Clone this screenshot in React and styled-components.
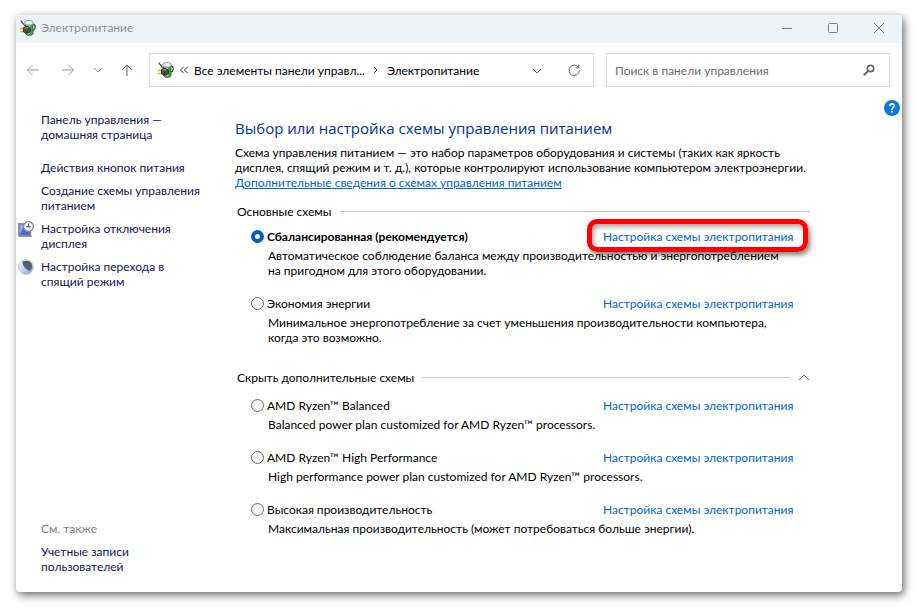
import React from 'react'
import styled, { createGlobalStyle } from 'styled-components'

const GlobalStyle = createGlobalStyle`
    * {
        box-sizing: border-box;
    }
    body {
        margin: 0;
        background: #fff;
        color: #000;
        font-family: Lato, "Noto Sans", sans-serif;
        font-size: 12px;
        line-height: 15px;
    }
    button, input {
        font: inherit;
        color: inherit;
    }
    p, h1, h2, ul, fieldset {
        margin: 0;
        padding: 0;
        border: 0;
    }
`

const Desktop = styled.div`
    display: flex;
    min-height: 100vh;
    padding: 15px 16px 16px;
`

const Window = styled.div`
    display: flex;
    flex-direction: column;
    flex: 1;
    min-width: 0;
    background: #fff;
    border-radius: 4px;
    overflow: hidden;
    box-shadow: 2px 3px 9px rgba(0, 0, 0, .6);
`

const TitleBar = styled.header`
    display: flex;
    align-items: center;
    height: 28px;
    padding: 0 0 3px 4px;
    background: #eef3f8;
    color: #8e9194;
`

const Title = styled.span`
    flex: 1;
    margin: 0 5px;
`

const CaptionButton = styled.button`
    display: flex;
    align-items: center;
    justify-content: center;
    width: 46px;
    height: 24px;
    padding: 0;
    border: 0;
    background: none;
    color: #7d8083;
`

const NavBar = styled.nav`
    display: flex;
    align-items: center;
    padding: 10px 12px 10px 8px;
`

const NavButtons = styled.div`
    display: flex;
    gap: 12px;
    width: 125px;
`

const IconButton = styled.button`
    display: flex;
    align-items: center;
    justify-content: center;
    width: ${props => props.$width || 18}px;
    height: 18px;
    padding: 0;
    border: 0;
    background: none;
    color: ${props => props.$dark ? '#666' : '#9a9a9a'};
`

const AddressBar = styled.div`
    display: flex;
    align-items: center;
    flex: 1;
    height: 34px;
    padding: 0 10px 0 8px;
    border: 1px solid #d9d9d9;
`

const Crumb = styled.button`
    padding: 0;
    border: 0;
    background: none;
    white-space: nowrap;
`

const Separator = styled.span`
    display: flex;
    justify-content: center;
    width: ${props => props.$width}px;
    color: #333;
`

const AddressActions = styled.div`
    display: flex;
    gap: 19px;
    margin-left: auto;
`

const SearchBox = styled.div`
    display: flex;
    align-items: center;
    flex: 0 1 284px;
    height: 34px;
    margin-left: 12px;
    padding: 0 11px 0 8px;
    border: 1px solid #d9d9d9;
`

const SearchInput = styled.input`
    flex: 1;
    min-width: 0;
    padding: 0;
    border: 0;
    outline: 0;
    background: none;
    &::placeholder {
        color: #6d6d6d;
        opacity: 1;
    }
`

const Content = styled.div`
    position: relative;
    display: flex;
    flex: 1;
    padding: 15px 92px 18px 0;
`

const HelpButton = styled.button`
    position: absolute;
    top: 3px;
    right: 2px;
    width: 16px;
    height: 16px;
    padding: 0;
    border: 0;
    background: none;
`

const Sidebar = styled.aside`
    display: flex;
    flex-direction: column;
    gap: 8px;
    width: 219px;
`

const SideLink = styled.a`
    display: grid;
    grid-template-columns: 16px 1fr;
    column-gap: 7px;
    padding-left: 2px;
    margin-bottom: ${props => props.$home ? 10 : 0}px;
    color: #151558;
    text-decoration: none;
`

const SideText = styled.span`
    grid-column: 2;
    white-space: nowrap;
`

const SeeAlso = styled.h2`
    margin-top: auto;
    padding-left: 25px;
    color: #808080;
    font-size: 12px;
    font-weight: 400;
`

const Main = styled.main`
    flex: 1;
    min-width: 0;
    padding-top: 6px;
`

const Heading = styled.h1`
    margin-bottom: 7px;
    color: #003399;
    font-family: "Open Sans", "Noto Sans", sans-serif;
    font-size: 15px;
    font-weight: 400;
    line-height: 20px;
    white-space: nowrap;
`

const Intro = styled.p`
    white-space: nowrap;
`

const MoreLink = styled.a`
    color: #0066cc;
    text-decoration: underline;
`

const Group = styled.fieldset`
    min-width: 0;
    margin-top: ${props => props.$first ? 14 : 25}px;
`

const GroupHeader = styled.div`
    display: flex;
    align-items: center;
    gap: 8px;
    margin: 0 0 ${props => props.$expandable ? 13 : 10}px 2px;
    white-space: nowrap;
`

const Rule = styled.span`
    flex: 1;
    height: 1px;
    background: #c8c8c8;
`

const ToggleButton = styled.button`
    display: flex;
    height: 15px;
    padding: 0;
    border: 0;
    background: none;
    color: #777;
`

const PlanList = styled.div`
    display: flex;
    flex-direction: column;
    gap: 18px;
    padding-left: 16px;
`

const PlanHead = styled.div`
    display: grid;
    grid-template-columns: 1fr 190px;
    margin-right: 17px;
    white-space: nowrap;
`

const PlanLabel = styled.label`
    display: flex;
    align-items: center;
    gap: 3px;
    font-weight: ${props => props.$active ? 700 : 400};
`

const Radio = styled.input`
    appearance: none;
    width: 13px;
    height: 13px;
    margin: 0;
    border: 1px solid #6e6e6e;
    border-radius: 50%;
    background: #f3f3f3;
    &:checked {
        border: 4px solid #005fb8;
        background: #fff;
    }
`

const LinkCell = styled.div`
    position: relative;
`

const PlanLink = styled.a`
    color: #0066cc;
    text-decoration: none;
`

const Marker = styled.span`
    position: absolute;
    inset: -10px -15px -8px -16px;
    border: 5px solid #f00;
    border-radius: 10px;
    box-shadow: 2px 3px 5px rgba(0, 0, 0, .5), inset 2px 3px 5px rgba(0, 0, 0, .35);
    pointer-events: none;
`

const PlanText = styled.p`
    margin-top: 4px;
    padding-left: 17px;
    white-space: nowrap;
`

const mainPlans = [
    {
        id: 'balanced',
        name: 'Сбалансированная (рекомендуется)',
        text: ['Автоматическое соблюдение баланса между производительностью и энергопотреблением', 'на пригодном для этого оборудовании.'],
        marked: true
    },
    {
        id: 'saver',
        name: 'Экономия энергии',
        text: ['Минимальное энергопотребление за счет уменьшения производительности компьютера,', 'когда это возможно.']
    }
]

const extraPlans = [
    { id: 'ryzen-balanced', name: 'AMD Ryzen™ Balanced', text: ['Balanced power plan customized for AMD Ryzen™ processors.'] },
    { id: 'ryzen-high', name: 'AMD Ryzen™ High Performance', text: ['High performance power plan customized for AMD Ryzen™ processors.'] },
    { id: 'high', name: 'Высокая производительность', text: ['Максимальная производительность (может потребоваться больше энергии).'] }
]

const PowerIcon = () => (
    <svg width="16" height="16" viewBox="0 0 16 16">
        <path d="M12.500 4.500c2.500-.5 3 1 2.600 3-.3 1.800-.9 2.600-2.600 2.600" fill="none" stroke="#4a4d4b" strokeWidth="1.300" />
        <path d="M5.500 3.500h7.500v9.700c0 3-7 3-7.500 0z" fill="#2fae3c" stroke="#2a5a30" strokeWidth=".8" />
        <path d="M7.500 4h2.500v10H7.500z" fill="#9aea94" />
        <path d="M5 2.200C5 0 13 0 13 2.200v2c-1 1.300-7 1.300-8 0z" fill="#eef4f6" stroke="#6b7a80" strokeWidth=".8" />
        <path d="M1 .5c0 2.500 3 2 3.500 5.500" fill="none" stroke="#444" strokeWidth="1.200" />
        <path d="M0 8.500h4M0 11.500h4" stroke="#e5a800" strokeWidth="1.500" />
        <path d="M3.500 7.700L5.500 6.500c3-.5 5 1 5 3.500S8 13.500 5.500 13l-2-1.200z" fill="#4a4d4c" stroke="#1c1c1c" strokeWidth=".8" />
        <path d="M4.800 8.300c1-.8 2.200-.8 3.400-.2" fill="none" stroke="#b5bab8" />
    </svg>
)

const DisplayIcon = () => (
    <svg width="16" height="16" viewBox="0 0 16 16">
        <path d="M.8 2.800h11.700v11.700H.8z" fill="#4a68dc" stroke="#8b8f98" strokeWidth="1.400" />
        <path d="M1.500 13.800L7 3.500H1.500z" fill="#8fa5f2" />
        <path d="M1 15.200h13" stroke="#777" />
        <circle cx="10.500" cy="5.500" r="4.900" fill="#f1f4f6" stroke="#8a8a86" strokeWidth="1.300" />
        <path d="M10.500 2.800v3h2.500M8 5.800h2" fill="none" stroke="#3a4f75" strokeWidth="1.100" />
    </svg>
)

const MoonIcon = () => (
    <svg width="16" height="16" viewBox="0 0 16 16">
        <defs>
            <linearGradient id="moon" x1="0" y1="0" x2="1" y2="1">
                <stop offset="0" stopColor="#f4f7fa" />
                <stop offset=".5" stopColor="#c2d6f2" />
                <stop offset="1" stopColor="#5f8fe8" />
            </linearGradient>
            <linearGradient id="shade" x1="1" y1="0" x2="0" y2="1">
                <stop offset="0" stopColor="#4c5258" />
                <stop offset=".6" stopColor="#59626e" />
                <stop offset="1" stopColor="#7f9fd8" />
            </linearGradient>
        </defs>
        <circle cx="8" cy="8" r="7.400" fill="url(#moon)" stroke="#c4c9ce" />
        <path d="M4.500 2.800C7.500 1 11.500 1.500 13.300 4.500c1.200 2.500.8 5.200-.8 6.800C8.500 12 4.500 8 4.500 2.800z" fill="url(#shade)" />
    </svg>
)

const Stroke = ({ d, width = 12, height = 12 }) => (
    <svg width={width} height={height} viewBox={`0 0 ${width} ${height}`} fill="none" stroke="currentColor">
        <path d={d} />
    </svg>
)

const PlanRow = ({ plan, selected, onSelect }) => (
    <div>
        <PlanHead>
            <PlanLabel htmlFor={plan.id} $active={selected}>
                <Radio type="radio" name="plan" id={plan.id} checked={selected} onChange={() => onSelect(plan.id)} />
                {plan.name}
            </PlanLabel>
            <LinkCell>
                <PlanLink href="#plan">Настройка схемы электропитания</PlanLink>
                {plan.marked && <Marker />}
            </LinkCell>
        </PlanHead>
        <PlanText>
            {plan.text.map((line, i) => <React.Fragment key={line}>{i > 0 && <br />}{line}</React.Fragment>)}
        </PlanText>
    </div>
)

export default class App extends React.Component {
    state = {
        plan: 'balanced',
        search: ''
    }

    selectPlan = (plan) => {
        this.setState({ plan })
    }

    handleSearch = (event) => {
        this.setState({ search: event.target.value })
    }

    renderPlans(plans) {
        return (
            <PlanList>
                {plans.map(plan => (
                    <PlanRow key={plan.id} plan={plan} selected={this.state.plan === plan.id} onSelect={this.selectPlan} />
                ))}
            </PlanList>
        )
    }

    render() {
        return (
            <Desktop>
                <GlobalStyle />
                <Window>
                    <TitleBar>
                        <PowerIcon />
                        <Title>Электропитание</Title>
                        <CaptionButton aria-label="Свернуть"><Stroke d="M1 6.500h10" /></CaptionButton>
                        <CaptionButton aria-label="Развернуть"><Stroke d="M2.500 1.500h7a1 1 0 0 1 1 1v7a1 1 0 0 1-1 1h-7a1 1 0 0 1-1-1v-7a1 1 0 0 1 1-1z" /></CaptionButton>
                        <CaptionButton aria-label="Закрыть"><Stroke d="M1 1l10 10M11 1L1 11" /></CaptionButton>
                    </TitleBar>
                    <NavBar>
                        <NavButtons>
                            <IconButton aria-label="Назад"><Stroke width={14} height={12} d="M13 6H1.500M6.500 1l-5 5 5 5" /></IconButton>
                            <IconButton $width={28} aria-label="Вперед"><Stroke width={14} height={12} d="M1 6h11.500M7.500 1l5 5-5 5" /></IconButton>
                            <IconButton $width={8} aria-label="Последние расположения"><Stroke width={8} d="M0 4l4 4 4-4" /></IconButton>
                            <IconButton $width={26} $dark aria-label="Вверх"><Stroke d="M6 12V1M1 6l5-5 5 5" /></IconButton>
                        </NavButtons>
                        <AddressBar>
                            <PowerIcon />
                            <Separator $width={20}><Stroke width={10} height={8} d="M4.500 1l-3 3 3 3M8.500 1l-3 3 3 3" /></Separator>
                            <Crumb>Все элементы панели управл...</Crumb>
                            <Separator $width={22}><Stroke width={6} height={8} d="M1 1l3 3-3 3" /></Separator>
                            <Crumb>Электропитание</Crumb>
                            <AddressActions>
                                <IconButton $dark aria-label="Предыдущие расположения"><Stroke width={10} d="M1 5l4 4 4-4" /></IconButton>
                                <IconButton $dark aria-label="Обновить"><Stroke d="M10.500 3.500A5.200 5.200 0 1 0 11.300 6.500M10.800 .5v3.300H7.500" /></IconButton>
                            </AddressActions>
                        </AddressBar>
                        <SearchBox>
                            <SearchInput aria-label="Поиск" placeholder="Поиск в панели управления" value={this.state.search} onChange={this.handleSearch} />
                            <IconButton $dark aria-label="Найти">
                                <svg width="12" height="12" viewBox="0 0 12 12" fill="none" stroke="currentColor">
                                    <circle cx="7.500" cy="4.500" r="3.200" strokeWidth="1.700" />
                                    <path d="M5 7L.8 11.200" strokeWidth="2" />
                                </svg>
                            </IconButton>
                        </SearchBox>
                    </NavBar>
                    <Content>
                        <HelpButton aria-label="Справка">
                            <svg width="16" height="16" viewBox="0 0 16 16">
                                <circle cx="8" cy="8" r="8" fill="#0a7ad6" />
                                <path d="M5.800 6.200C5.800 3 10.300 3.200 10.200 6 10.100 7.700 8 7.600 8 9.700" fill="none" stroke="#fff" strokeWidth="1.600" />
                                <circle cx="8" cy="11.800" r="1" fill="#fff" />
                            </svg>
                        </HelpButton>
                        <Sidebar>
                            <SideLink href="#home" $home><SideText>Панель управления —<br />домашняя страница</SideText></SideLink>
                            <SideLink href="#buttons"><SideText>Действия кнопок питания</SideText></SideLink>
                            <SideLink href="#create"><SideText>Создание схемы управления<br />питанием</SideText></SideLink>
                            <SideLink href="#display"><DisplayIcon /><SideText>Настройка отключения<br />дисплея</SideText></SideLink>
                            <SideLink href="#sleep"><MoonIcon /><SideText>Настройка перехода в<br />спящий режим</SideText></SideLink>
                            <SeeAlso>См. также</SeeAlso>
                            <SideLink href="#users"><SideText>Учетные записи<br />пользователей</SideText></SideLink>
                        </Sidebar>
                        <Main>
                            <Heading>Выбор или настройка схемы управления питанием</Heading>
                            <Intro>
                                Схема управления питанием — это набор параметров оборудования и системы (таких как яркость<br />
                                дисплея, спящий режим и т. д.), которые контролируют использование компьютером электроэнергии.<br />
                                <MoreLink href="#more">Дополнительные сведения о схемах управления питанием</MoreLink>
                            </Intro>
                            <Group $first aria-label="Основные схемы">
                                <GroupHeader>Основные схемы<Rule /></GroupHeader>
                                {this.renderPlans(mainPlans)}
                            </Group>
                            <Group aria-label="Дополнительные схемы">
                                <GroupHeader $expandable>
                                    Скрыть дополнительные схемы<Rule />
                                    <ToggleButton aria-label="Скрыть дополнительные схемы"><Stroke width={12} height={15} d="M1 10l5-5 5 5" /></ToggleButton>
                                </GroupHeader>
                                {this.renderPlans(extraPlans)}
                            </Group>
                        </Main>
                    </Content>
                </Window>
            </Desktop>
        )
    }
}
